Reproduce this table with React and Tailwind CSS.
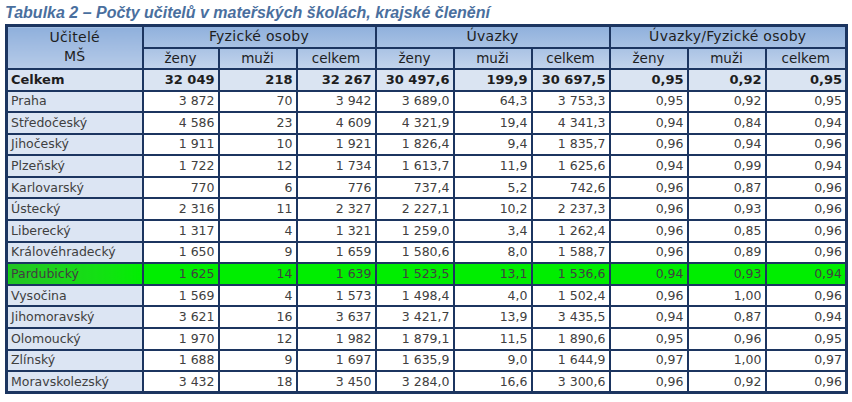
const rows = [
  ["Praha", "3 872", "70", "3 942", "3 689,0", "64,3", "3 753,3", "0,95", "0,92", "0,95"],
  ["Středočeský", "4 586", "23", "4 609", "4 321,9", "19,4", "4 341,3", "0,94", "0,84", "0,94"],
  ["Jihočeský", "1 911", "10", "1 921", "1 826,4", "9,4", "1 835,7", "0,96", "0,94", "0,96"],
  ["Plzeňský", "1 722", "12", "1 734", "1 613,7", "11,9", "1 625,6", "0,94", "0,99", "0,94"],
  ["Karlovarský", "770", "6", "776", "737,4", "5,2", "742,6", "0,96", "0,87", "0,96"],
  ["Ústecký", "2 316", "11", "2 327", "2 227,1", "10,2", "2 237,3", "0,96", "0,93", "0,96"],
  ["Liberecký", "1 317", "4", "1 321", "1 259,0", "3,4", "1 262,4", "0,96", "0,85", "0,96"],
  ["Královéhradecký", "1 650", "9", "1 659", "1 580,6", "8,0", "1 588,7", "0,96", "0,89", "0,96"],
  ["Pardubický", "1 625", "14", "1 639", "1 523,5", "13,1", "1 536,6", "0,94", "0,93", "0,94"],
  ["Vysočina", "1 569", "4", "1 573", "1 498,4", "4,0", "1 502,4", "0,96", "1,00", "0,96"],
  ["Jihomoravský", "3 621", "16", "3 637", "3 421,7", "13,9", "3 435,5", "0,94", "0,87", "0,94"],
  ["Olomoucký", "1 970", "12", "1 982", "1 879,1", "11,5", "1 890,6", "0,95", "0,96", "0,95"],
  ["Zlínský", "1 688", "9", "1 697", "1 635,9", "9,0", "1 644,9", "0,97", "1,00", "0,97"],
  ["Moravskolezský", "3 432", "18", "3 450", "3 284,0", "16,6", "3 300,6", "0,96", "0,92", "0,96"],
];

const total = ["Celkem", "32 049", "218", "32 267", "30 497,6", "199,9", "30 697,5", "0,95", "0,92", "0,95"];

const widths = [136, 76, 78, 79, 78, 78, 78, 78, 78, 81];

export default function App() {
  return (
    <div className="w-[852px] h-[402px] bg-white overflow-hidden" style={{ fontFamily: "'DejaVu Sans', sans-serif" }}>
      <h1
        className="pl-[5px] pt-[2px] h-[24px] text-[16px] leading-[22px] font-bold italic text-[#4a6f9e]"
        style={{ fontFamily: "'Liberation Sans', sans-serif" }}
      >
        Tabulka 2 – Počty učitelů v mateřských školách, krajské členění
      </h1>

      <table className="ml-[5px] table-fixed border-collapse border-[3px] border-[#1c3560] text-[12.5px] text-[#404040]">
        <colgroup>
          {widths.map((w, i) => (
            <col key={i} style={{ width: w }} />
          ))}
        </colgroup>
        <thead className="text-[#1e1e1e]">
          <tr className="h-[22px] bg-gradient-to-b from-[#8fb0dc] to-[#a9c2e4]">
            <th rowSpan={2} className="border-2 border-[#1c3560] font-normal leading-[19px] text-[14px] tracking-[0.3px] bg-gradient-to-b from-[#8fb0dc] to-[#b7cbe8]">
              Učitelé
              <br />
              MŠ
            </th>
            <th colSpan={3} className="border-2 border-[#1c3560] font-normal leading-[17px] text-[14px] tracking-[0.3px]">Fyzické osoby</th>
            <th colSpan={3} className="border-2 border-[#1c3560] font-normal leading-[17px] text-[14px] tracking-[0.3px]">Úvazky</th>
            <th colSpan={3} className="border-2 border-[#1c3560] font-normal leading-[17px] text-[14px] tracking-[0.3px]">Úvazky/Fyzické osoby</th>
          </tr>
          <tr className="h-[21px] bg-gradient-to-b from-[#a9c2e4] to-[#c3d4ec]">
            {["ženy", "muži", "celkem", "ženy", "muži", "celkem", "ženy", "muži", "celkem"].map((t, i) => (
              <th key={i} className="border-2 border-[#1c3560] font-normal leading-[17px] text-[13.5px]">
                {t}
              </th>
            ))}
          </tr>
        </thead>
        <tbody>
          <tr className="h-[22px] bg-[#dae4f2] font-bold text-[13px] text-[#1e1e1e]">
            {total.map((v, i) => (
              <td key={i} className={`border-2 border-[#1c3560] leading-[17px] ${i === 0 ? "text-left pl-[3px]" : "text-right pr-[3px]"}`}>
                {v}
              </td>
            ))}
          </tr>
          {rows.map((r) => {
            const green = r[0] === "Pardubický";
            return (
              <tr key={r[0]} className={`h-[21.6px] ${green ? "bg-[#00ee00]" : "bg-white"}`}>
                {r.map((v, i) => (
                  <td
                    key={i}
                    className={`border-2 border-[#1c3560] leading-[16px] ${
                      i === 0
                        ? `text-left pl-[3px] ${green ? "bg-gradient-to-r from-[#22c422] to-[#00ee00]" : "bg-[#dce5f3]"}`
                        : "text-right pr-[3px]"
                    }`}
                  >
                    {v}
                  </td>
                ))}
              </tr>
            );
          })}
        </tbody>
      </table>
    </div>
  );
}
